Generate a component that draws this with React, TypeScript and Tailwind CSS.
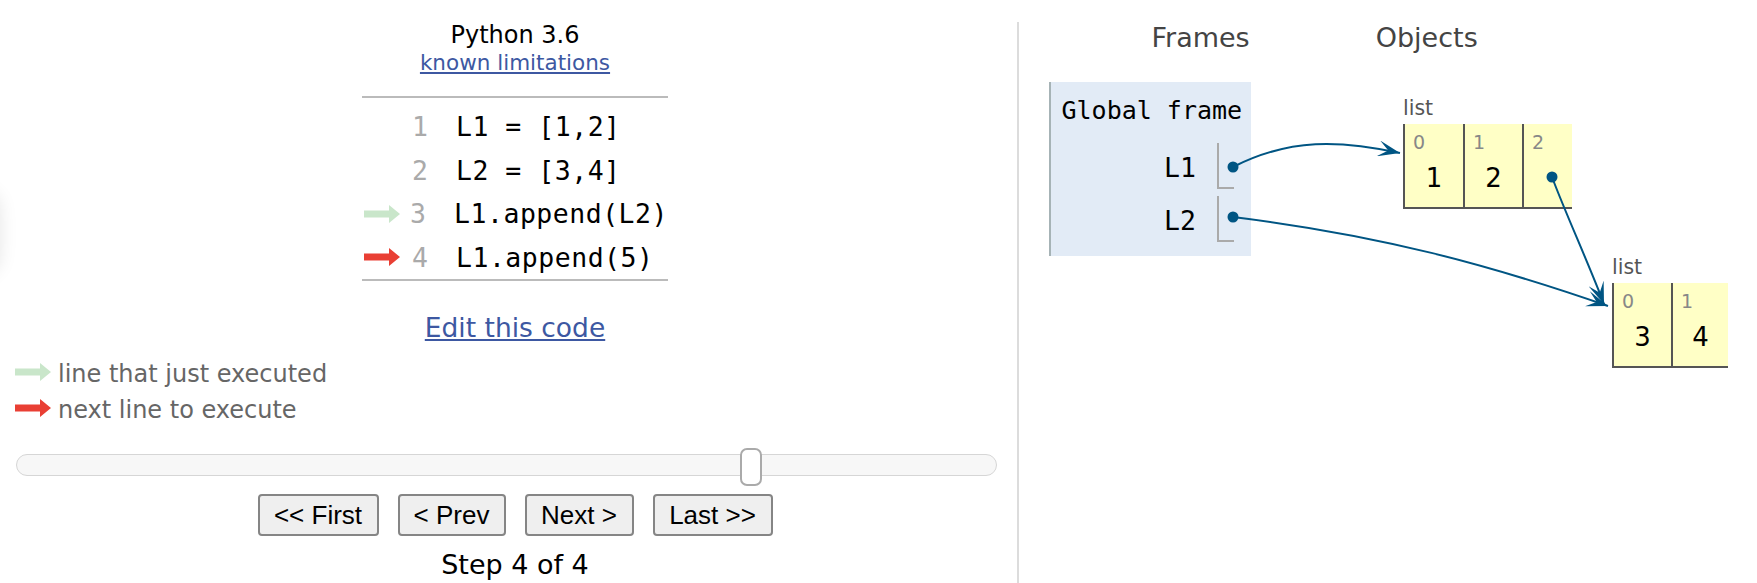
import React from "react";

const GREEN = "#c9e6ca";
const RED = "#e93f34";
const POINTER = "#005583";

interface ArrowProps {
    color: string;
}

const LineArrow: React.FC<ArrowProps> = ({ color }) => (
    <svg width="36" height="18" viewBox="0 0 36 18">
        <polygon points="0,5.5 25,5.5 25,0 36,9 25,18 25,12.5 0,12.5" fill={color} />
    </svg>
);

const codeLines = [
    { n: 1, code: "L1 = [1,2]", arrow: "" },
    { n: 2, code: "L2 = [3,4]", arrow: "" },
    { n: 3, code: "L1.append(L2)", arrow: GREEN },
    { n: 4, code: "L1.append(5)", arrow: RED },
];

const LeftPanel: React.FC = () => (
    <div className="w-[1017px] shrink-0 pl-[13px]">
        <div className="pt-[21px] text-center">
            <div className="text-[24px] leading-[28px] text-black">Python 3.6</div>
            <div className="text-[21.5px] leading-[27px]">
                <a href="#" className="text-[#3d58a2] underline">
                    known limitations
                </a>
            </div>
        </div>

        <div className="mx-auto mt-[20px] w-[306px] border-y-2 border-[#bbbbbb] pt-[7px] font-['DejaVu_Sans_Mono',monospace] text-[26.5px]">
            {codeLines.map((line) => (
                <div key={line.n} className="flex h-[43.5px] leading-[43.5px]">
                    <div className="flex w-[40px] items-center pl-[2px]">
                        {line.arrow && <LineArrow color={line.arrow} />}
                    </div>
                    <div className="w-[26px] text-right text-[#aaaaaa]">{line.n}</div>
                    <div className="whitespace-pre pl-[28px] tracking-[0.5px] text-black">{line.code}</div>
                </div>
            ))}
        </div>

        <div className="mt-[31px] text-center text-[26.5px] leading-[32px]">
            <a href="#" className="text-[#3d58a2] underline">
                Edit this code
            </a>
        </div>

        <div className="ml-[2px] mt-[12px] text-[24px] leading-[36px] text-[#666666]">
            <div className="flex items-center gap-[7px]">
                <div className="mb-[4px] flex">
                    <LineArrow color={GREEN} />
                </div>
                <span>line that just executed</span>
            </div>
            <div className="flex items-center gap-[7px]">
                <div className="mb-[4px] flex">
                    <LineArrow color={RED} />
                </div>
                <span>next line to execute</span>
            </div>
        </div>

        <div className="relative ml-[3px] mr-[20px] mt-[20px] h-[38px] pt-[6px]">
            <div className="h-[22px] w-full rounded-full border border-[#d6d6d6] bg-[#f7f7f7]" />
            <div className="absolute left-[724px] top-0 h-[38px] w-[22px] rounded-[7px] border-2 border-[#aaaaaa] bg-white" />
        </div>

        <div className="mt-[8px] flex justify-center gap-[19px] font-['Liberation_Sans',Arial,sans-serif] text-[26px] text-black">
            <button className="h-[42px] w-[121px] rounded-[4px] border-2 border-[#858585] bg-[#efefef] leading-none">
                &lt;&lt; First
            </button>
            <button className="h-[42px] w-[108px] rounded-[4px] border-2 border-[#858585] bg-[#efefef] leading-none">
                &lt; Prev
            </button>
            <button className="h-[42px] w-[109px] rounded-[4px] border-2 border-[#858585] bg-[#efefef] leading-none">
                Next &gt;
            </button>
            <button className="h-[42px] w-[120px] rounded-[4px] border-2 border-[#858585] bg-[#efefef] leading-none">
                Last &gt;&gt;
            </button>
        </div>

        <div className="mt-[14px] text-center text-[27px] leading-[30px] text-black">Step 4 of 4</div>
    </div>
);

interface Cell {
    idx: number;
    val?: string;
    w: string;
}

interface HeapListProps {
    pos: string;
    cells: Cell[];
}

const HeapList: React.FC<HeapListProps> = ({ pos, cells }) => (
    <div className={`absolute ${pos}`}>
        <div className="text-[20.5px] leading-[24px] text-[#555555]">list</div>
        <div className="mt-[4px] flex border-b-2 border-[#555555]">
            {cells.map((c) => (
                <div
                    key={c.idx}
                    className={`h-[83px] border-l-2 border-[#555555] bg-[#ffffc6] pl-[8px] pt-[7px] ${c.w}`}
                >
                    <div className="text-[19px] leading-[22px] text-[#888888]">{c.idx}</div>
                    {c.val && (
                        <div className="mt-[10px] pr-[8px] text-center text-[26px] leading-[30px] text-black">
                            {c.val}
                        </div>
                    )}
                </div>
            ))}
        </div>
    </div>
);

const RightPanel: React.FC = () => (
    <div className="relative flex-1">
        <div className="flex pt-[23px] text-[27px] leading-[30px] text-[#444444]">
            <span className="ml-[132.5px]">Frames</span>
            <span className="ml-[126px]">Objects</span>
        </div>

        <div className="ml-[30px] mt-[29px] w-[202px] border-l-2 border-[#a6b3b6] bg-[#e2ebf6] pb-[12px] pt-[14px] font-['DejaVu_Sans_Mono',monospace] text-black">
            <div className="whitespace-pre pl-[10.5px] text-[25px] leading-[30px]">Global frame</div>
            <div className="mt-[17px] flex flex-col gap-[5px] pr-[17px]">
                {["L1", "L2"].map((name) => (
                    <div key={name} className="flex justify-end">
                        <span className="pr-[21px] pt-[2px] text-[26.5px] leading-[46px]">{name}</span>
                        <div className="h-[46px] w-[17px] border-b-2 border-l-2 border-[#aaaaaa]" />
                    </div>
                ))}
            </div>
        </div>

        <HeapList
            pos="left-[384px] top-[96px]"
            cells={[
                { idx: 0, val: "1", w: "w-[60px]" },
                { idx: 1, val: "2", w: "w-[59px]" },
                { idx: 2, w: "w-[50px]" },
            ]}
        />
        <HeapList
            pos="left-[593px] top-[255px]"
            cells={[
                { idx: 0, val: "3", w: "w-[59px]" },
                { idx: 1, val: "4", w: "w-[57px]" },
            ]}
        />
    </div>
);

const Connectors: React.FC = () => (
    <svg className="pointer-events-none absolute left-0 top-0" width="1757" height="583">
        <defs>
            <marker
                id="head"
                markerWidth="22"
                markerHeight="16"
                refX="22"
                refY="8"
                orient="auto"
                markerUnits="userSpaceOnUse"
            >
                <path d="M0,0 L22,8 L0,16 L10,8 Z" fill={POINTER} />
            </marker>
        </defs>
        <path
            d="M1233,167 C1290,138 1340,140 1400,153"
            fill="none"
            stroke={POINTER}
            strokeWidth="2"
            markerEnd="url(#head)"
        />
        <path
            d="M1233,217 C1380,235 1490,265 1608,306"
            fill="none"
            stroke={POINTER}
            strokeWidth="2"
            markerEnd="url(#head)"
        />
        <path
            d="M1552,177 C1565,212 1588,262 1604,304"
            fill="none"
            stroke={POINTER}
            strokeWidth="2"
            markerEnd="url(#head)"
        />
        <circle cx="1233" cy="167" r="5.5" fill={POINTER} />
        <circle cx="1233" cy="217" r="5.5" fill={POINTER} />
        <circle cx="1552" cy="177" r="5.5" fill={POINTER} />
    </svg>
);

export default function App() {
    return (
        <div className="relative flex h-[583px] w-[1757px] overflow-hidden bg-white font-['DejaVu_Sans',Verdana,sans-serif]">
            <div className="pointer-events-none absolute left-[-40px] top-[190px] h-[85px] w-[40px] rounded-[20px] shadow-[0_0_18px_rgba(0,0,0,0.10)]" />
            <LeftPanel />
            <div className="mt-[22px] w-[2px] shrink-0 self-stretch bg-[#dcdcdc]" />
            <RightPanel />
            <Connectors />
        </div>
    );
}
